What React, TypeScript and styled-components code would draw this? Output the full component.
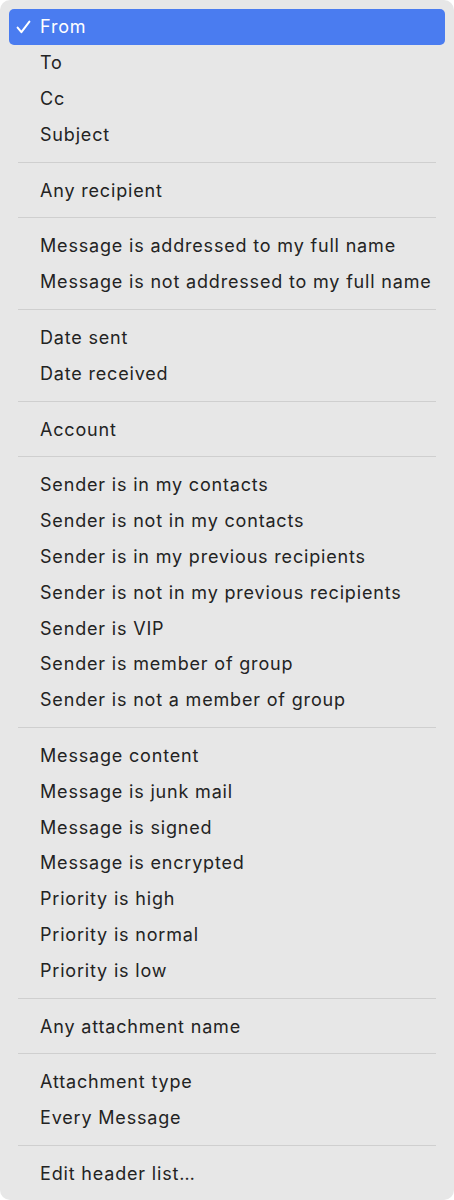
import React from "react";
import styled, { createGlobalStyle } from "styled-components";

const Global = createGlobalStyle`
  html, body { margin: 0; padding: 0; background: #ffffff; }
  body { font-family: Inter, "Noto Sans", "Liberation Sans", sans-serif; -webkit-font-smoothing: antialiased; }
`;

const Menu = styled.div`
  width: 454px;
  height: 1200px;
  box-sizing: border-box;
  background: #e7e7e7;
  border-radius: 10px;
  padding: 9px 9px 8px;
  display: flex;
  flex-direction: column;
  overflow: hidden;
`;

const Item = styled.div<{ $active?: boolean }>`
  height: 35.8px;
  flex: none;
  display: flex;
  align-items: center;
  border-radius: 5px;
  padding-left: 7px;
  font-size: 18px;
  letter-spacing: 0.82px;
  color: ${(p) => (p.$active ? "#ffffff" : "#232323")};
  background: ${(p) => (p.$active ? "#4a7cf0" : "transparent")};
`;

const CheckSlot = styled.span`
  width: 24px;
  flex: none;
  display: flex;
  align-items: center;
`;

const Separator = styled.div`
  height: 20px;
  flex: none;
  display: flex;
  align-items: center;
  padding: 0 9px;
  &::after {
    content: "";
    flex: 1;
    height: 1px;
    background: #cfcfcf;
  }
`;

const groups: string[][] = [
  ["From", "To", "Cc", "Subject"],
  ["Any recipient"],
  ["Message is addressed to my full name", "Message is not addressed to my full name"],
  ["Date sent", "Date received"],
  ["Account"],
  [
    "Sender is in my contacts",
    "Sender is not in my contacts",
    "Sender is in my previous recipients",
    "Sender is not in my previous recipients",
    "Sender is VIP",
    "Sender is member of group",
    "Sender is not a member of group",
  ],
  [
    "Message content",
    "Message is junk mail",
    "Message is signed",
    "Message is encrypted",
    "Priority is high",
    "Priority is normal",
    "Priority is low",
  ],
  ["Any attachment name"],
  ["Attachment type", "Every Message"],
  ["Edit header list…"],
];

const Check = () => (
  <svg width="15" height="14" viewBox="0 0 15 14">
    <path d="M1.6 7.6 L5.4 12.2 L13.4 1.6" fill="none" stroke="#fff" strokeWidth="2" strokeLinecap="round" strokeLinejoin="round" />
  </svg>
);

export default function App() {
  return (
    <>
      <Global />
      <Menu>
        {groups.map((g, gi) => (
          <React.Fragment key={gi}>
            {gi > 0 && <Separator />}
            {g.map((label) => {
              const active = label === "From";
              return (
                <Item key={label} $active={active}>
                  <CheckSlot>{active && <Check />}</CheckSlot>
                  {label}
                </Item>
              );
            })}
          </React.Fragment>
        ))}
      </Menu>
    </>
  );
}
